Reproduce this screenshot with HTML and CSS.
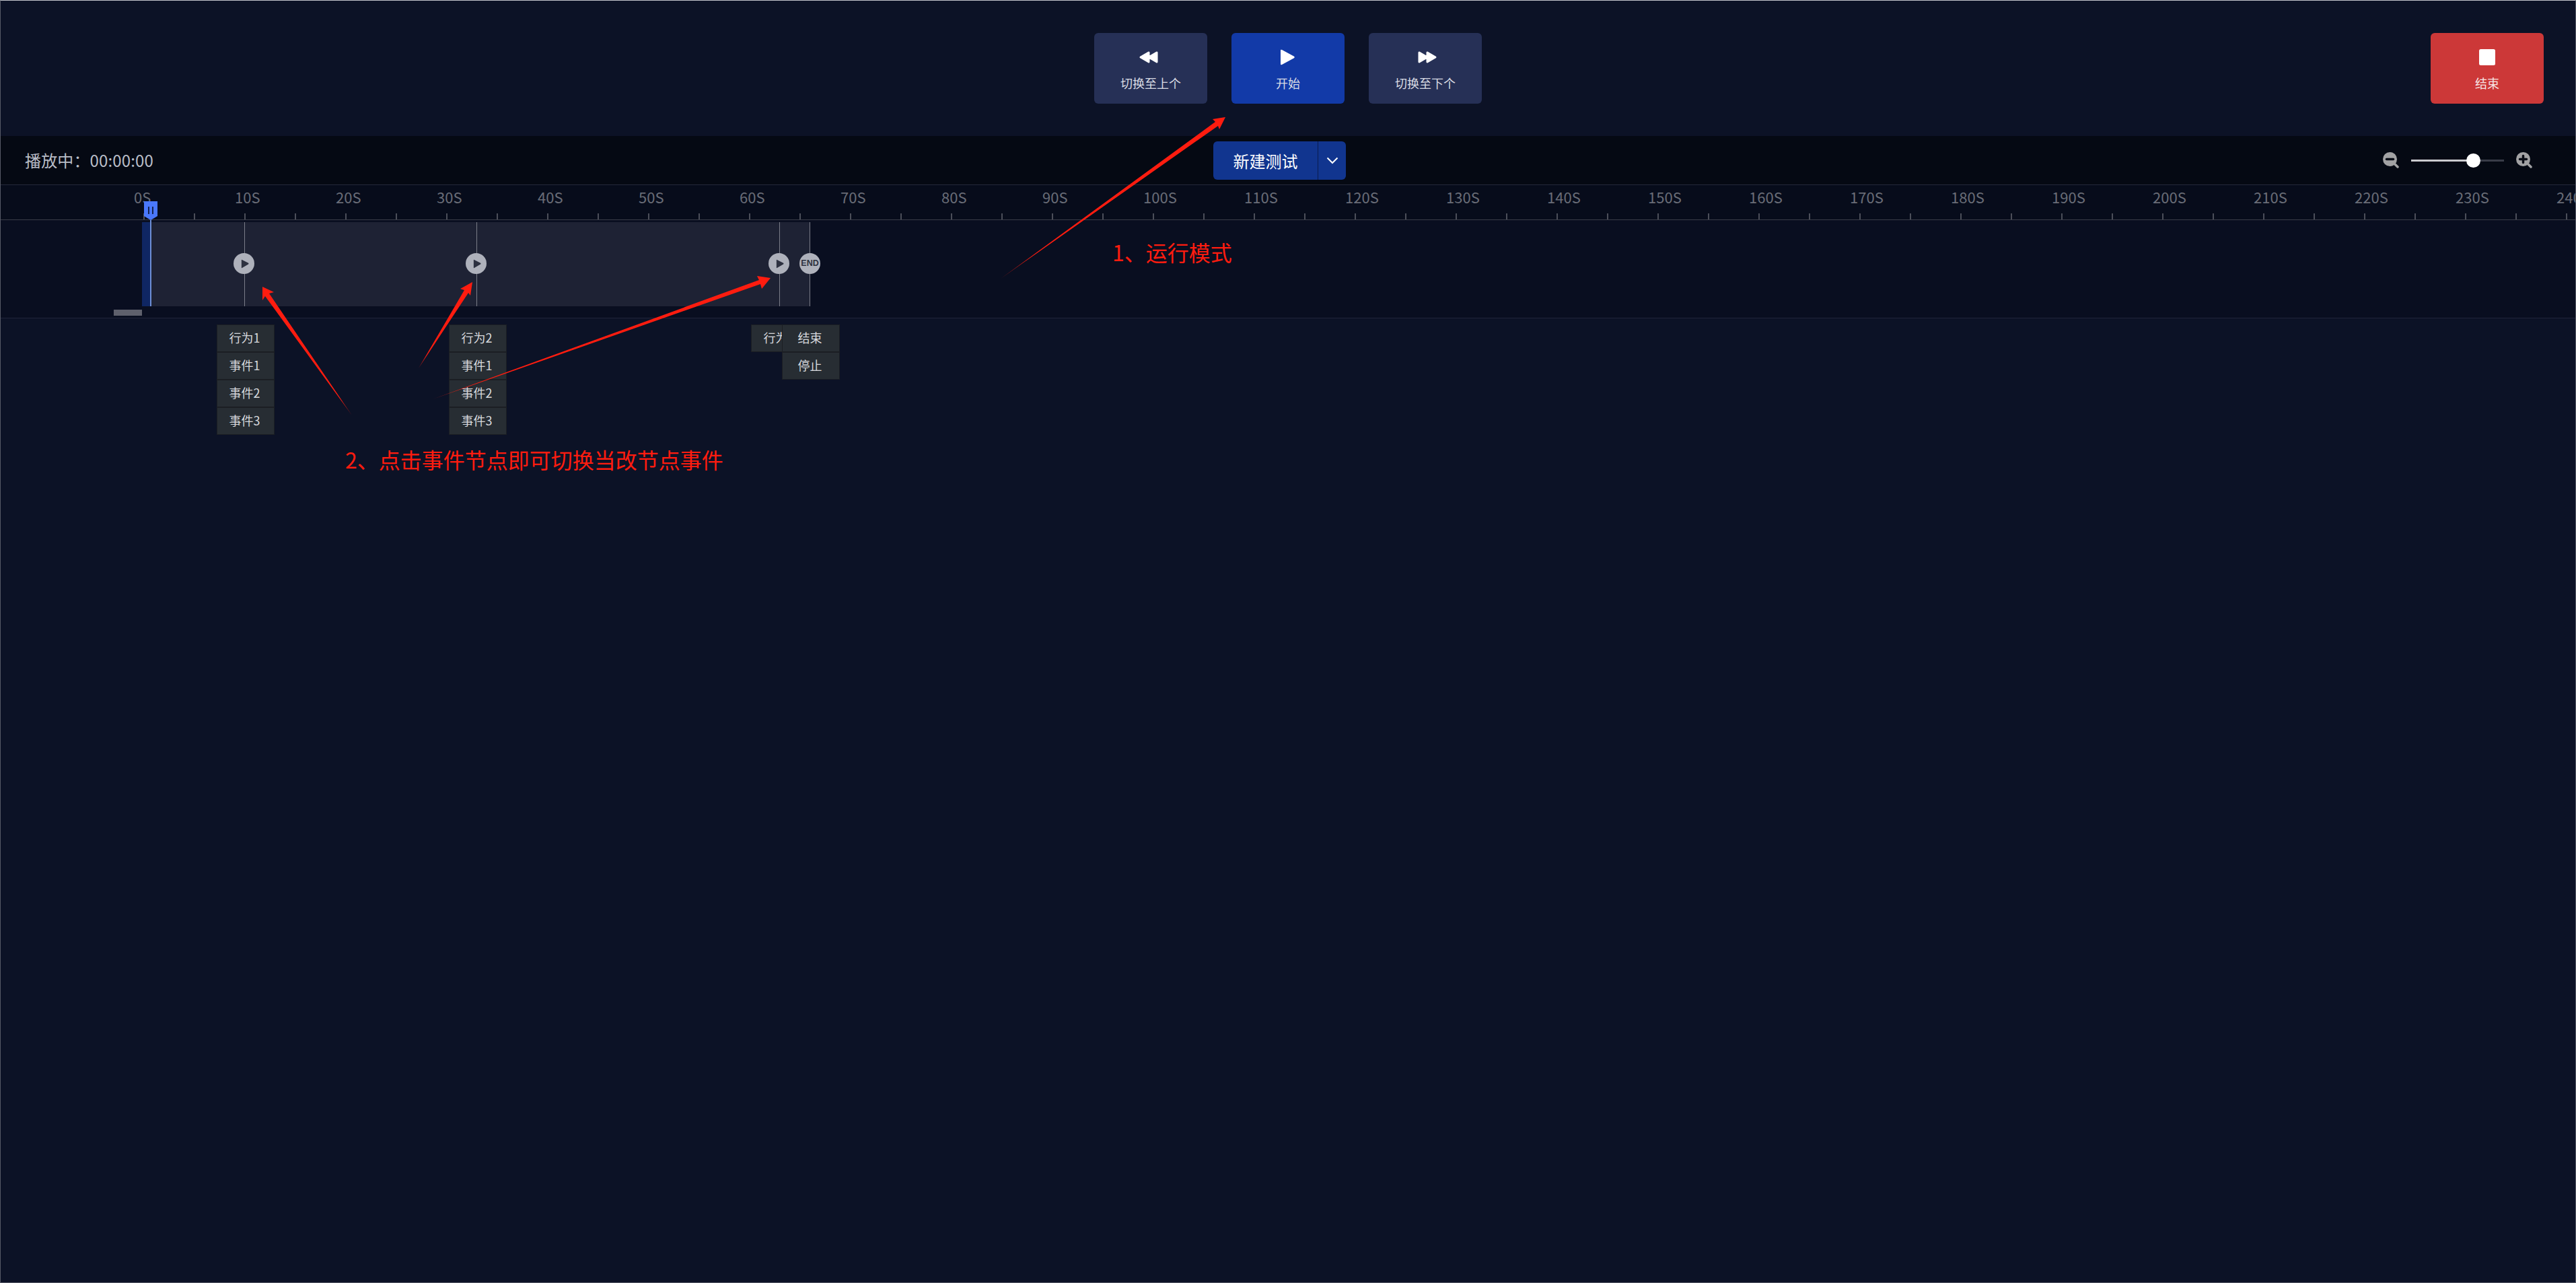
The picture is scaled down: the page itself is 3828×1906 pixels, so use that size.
FILE: index.html
```html
<!DOCTYPE html>
<html lang="zh">
<head>
<meta charset="utf-8">
<title>运行模式</title>
<link rel="stylesheet" href="styles.css">
</head>
<body>
<div class="page">
  <header class="controls">
    <div class="controls-center">
      <button class="ctl ctl-muted">
        <svg class="ctl-icon" viewBox="3 0 28 24"><path d="M2 12 14 5V19ZM14 12 26 5V19Z"/></svg>
        <span>切换至上个</span>
      </button>
      <button class="ctl ctl-primary">
        <svg class="ctl-icon ctl-icon-solid" viewBox="0 0 28 24"><path d="M3 2q0-2 2-.9l18 9.700q1.800 1.200 0 2.400l-18 9.700q-2 1.100-2-.9z"/></svg>
        <span>开始</span>
      </button>
      <button class="ctl ctl-muted">
        <svg class="ctl-icon" viewBox="-3 0 28 24"><path d="M2 5 14 12 2 19ZM14 5 26 12 14 19Z"/></svg>
        <span>切换至下个</span>
      </button>
    </div>
    <button class="ctl ctl-danger">
      <svg class="ctl-icon ctl-icon-solid" viewBox="0 0 28 24"><rect x="2" y="0" width="24" height="24" rx="2.5"/></svg>
      <span>结束</span>
    </button>
  </header>

  <div class="status">
    <div class="status-text">播放中：00:00:00</div>
    <div class="split">
      <span class="split-main">新建测试</span>
      <span class="split-arrow"><svg viewBox="0 0 18 11"><path d="M1.500 1.500 9 9l7.500-7.500"/></svg></span>
    </div>
    <div class="zoom">
      <svg class="zoom-icon" viewBox="0 0 24 24"><circle cx="10.500" cy="10.500" r="10.500"/><path class="glass" d="m17 17 5 5"/><path class="sign" d="M5.500 10.500h10"/></svg>
      <div class="slider"><div class="slider-fill"></div><div class="slider-knob"></div></div>
      <svg class="zoom-icon" viewBox="0 0 24 24"><circle cx="10.500" cy="10.500" r="10.500"/><path class="glass" d="m17 17 5 5"/><path class="sign" d="M5.500 10.500h10M10.500 5.500v10"/></svg>
    </div>
  </div>

  <div class="ruler">
    <div class="ruler-labels">
      <span>0S</span><span>10S</span><span>20S</span><span>30S</span><span>40S</span><span>50S</span><span>60S</span><span>70S</span><span>80S</span><span>90S</span><span>100S</span><span>110S</span><span>120S</span><span>130S</span><span>140S</span><span>150S</span><span>160S</span><span>170S</span><span>180S</span><span>190S</span><span>200S</span><span>210S</span><span>220S</span><span>230S</span><span>240S</span>
    </div>
    <div class="ruler-ticks"></div>
  </div>

  <section class="track">
    <div class="track-bar">
      <div class="track-progress"></div>
      <div class="node node-a"><span class="node-dot"><svg viewBox="0 0 14 16"><path d="M1 1.500v13q0 1 1 .5l11-6.500q1-1 0-2L2 1q-1-.5-1 .5z"/></svg></span></div>
      <div class="node node-b"><span class="node-dot"><svg viewBox="0 0 14 16"><path d="M1 1.500v13q0 1 1 .5l11-6.500q1-1 0-2L2 1q-1-.5-1 .5z"/></svg></span></div>
      <div class="node node-c"><span class="node-dot"><svg viewBox="0 0 14 16"><path d="M1 1.500v13q0 1 1 .5l11-6.500q1-1 0-2L2 1q-1-.5-1 .5z"/></svg></span></div>
      <div class="node node-end"><span class="node-dot node-dot-end">END</span></div>
    </div>
    <div class="track-thumb"></div>
  </section>

  <main class="events">
    <ul class="menu menu-a"><li>行为1</li><li>事件1</li><li>事件2</li><li>事件3</li></ul>
    <ul class="menu menu-b"><li>行为2</li><li>事件1</li><li>事件2</li><li>事件3</li></ul>
    <ul class="menu menu-c"><li>行为3</li></ul>
    <ul class="menu menu-end"><li>结束</li><li>停止</li></ul>
  </main>

  <div class="playhead">
    <svg class="playhead-flag" viewBox="0 0 20 28"><path class="flag" d="M0 0h20v22l-10 6-10-6z"/><path class="bars" d="M7 8v11M13 8v11"/></svg>
    <div class="playhead-line"></div>
  </div>

  <div class="note note-1">1、运行模式</div>
  <div class="note note-2">2、点击事件节点即可切换当改节点事件</div>
  <svg class="arrows" viewBox="0 0 3828 1906">
    <defs>
      <linearGradient id="fade1" gradientUnits="userSpaceOnUse" x1="1487" y1="414" x2="1540" y2="376"><stop offset="0" stop-color="#ff1c0f" stop-opacity=".6"/><stop offset="1" stop-color="#ff1c0f"/></linearGradient>
      <linearGradient id="fade2" gradientUnits="userSpaceOnUse" x1="523" y1="617" x2="505" y2="590"><stop offset="0" stop-color="#ff1c0f" stop-opacity=".6"/><stop offset="1" stop-color="#ff1c0f"/></linearGradient>
      <linearGradient id="fade3" gradientUnits="userSpaceOnUse" x1="622" y1="547" x2="634" y2="527"><stop offset="0" stop-color="#ff1c0f" stop-opacity=".6"/><stop offset="1" stop-color="#ff1c0f"/></linearGradient>
      <linearGradient id="fade4" gradientUnits="userSpaceOnUse" x1="643" y1="593" x2="685" y2="578"><stop offset="0" stop-color="#ff1c0f" stop-opacity=".6"/><stop offset="1" stop-color="#ff1c0f"/></linearGradient>
    </defs>
    <path fill="url(#fade1)" d="M1487 414 1806 181 1802 177 1821 174 1812 192 1810 187z"/>
    <path fill="url(#fade2)" d="M523 617 400 436 407 434 390 426 390 446 394 440z"/>
    <path fill="url(#fade3)" d="M622 547 690 431 684 429 702 419 699 439 696 435z"/>
    <path fill="url(#fade4)" d="M643 593 1128 416 1125 410 1145 413 1132 429 1130 422z"/>
  </svg>
</div>
</body>
</html>
```
FILE: styles.css
```css
* { box-sizing: border-box; }
html, body { margin: 0; padding: 0; background: #0c1226; }
body { font-family: "Noto Sans CJK SC", "Noto Sans", sans-serif; }

.page {
  position: relative;
  width: 3828px;
  height: 1906px;
  overflow: hidden;
  background: #0c1226;
  border: 1px solid #565966;
  border-top-color: #c4c6cc;
  display: flex;
  flex-direction: column;
}

.controls {
  height: 201px;
  flex: none;
  display: grid;
  grid-template-columns: 1fr auto 1fr;
  align-items: start;
  padding-top: 48px;
  background: #0c1226;
}
.controls-center { grid-column: 2; display: flex; gap: 36px; }
.ctl-danger { grid-column: 3; justify-self: end; margin-right: 47px; }

.ctl {
  width: 168px;
  height: 105px;
  border: 0;
  border-radius: 6px;
  padding: 24px 0 0;
  display: flex;
  flex-direction: column;
  align-items: center;
  font: 18px/24px "Noto Sans CJK SC", sans-serif;
  color: #d9dce4;
  gap: 14px;
}
.ctl-icon { width: 28px; height: 24px; fill: #fff; stroke: #fff; stroke-width: 3; stroke-linejoin: round; flex: none; overflow: visible; }
.ctl-icon-solid { stroke: none; }
.ctl-muted { background: #263056; }
.ctl-primary { background: #123aa8; }
.ctl-danger { background: #cc3838; color: #f6e4e4; }

.status {
  height: 72px;
  flex: none;
  display: grid;
  grid-template-columns: 1fr auto 1fr;
  align-items: center;
  background: #050913;
}
.status-text { margin-left: 36px; font-size: 24px; line-height: 32px; color: #b9bdc7; letter-spacing: .15px; }
.split {
  display: flex;
  height: 57px;
  margin-right: 25px;
  border-radius: 6px;
  overflow: hidden;
  background: #11358f;
  color: #fff;
  font-size: 24px;
  width: 197px;
}
.split-main { width: 156px; display: flex; align-items: center; justify-content: center; border-right: 1px solid #0a1c4e; }
.split-arrow { flex: 1; display: flex; align-items: center; justify-content: center; }
.split-arrow svg { width: 18px; height: 11px; fill: none; stroke: #fff; stroke-width: 2; }

.zoom { justify-self: end; display: flex; align-items: center; margin-right: 64px; }
.zoom-icon { width: 24px; height: 24px; fill: #a2a2a4; }
.zoom-icon .glass { stroke: #a2a2a4; stroke-width: 3.500; stroke-linecap: round; fill: none; }
.zoom-icon .sign { stroke: #0a0d16; stroke-width: 3.500; stroke-linecap: round; fill: none; }
.slider { position: relative; width: 138px; height: 3px; margin: 0 18px; background: #393c48; }
.slider-fill { width: 92px; height: 100%; background: #cbcbcf; }
.slider-knob { position: absolute; left: 82px; top: -9px; width: 21px; height: 21px; border-radius: 50%; background: #fff; }

.ruler {
  height: 53px;
  flex: none;
  background: #070c1b;
  border-top: 1px solid #24283a;
  border-bottom: 1px solid #3a3d48;
  display: flex;
  flex-direction: column;
  overflow: hidden;
}
.ruler-labels {
  display: flex;
  padding: 3px 0 0 198px;
  height: 42px;
  font-size: 22px;
  line-height: 29px;
  color: #696c77;
}
.ruler-labels span { flex: none; width: 150px; }
.ruler-ticks {
  flex: 1;
  margin-left: 212px;
  background-image: linear-gradient(90deg, #4b4e59 2px, transparent 2px);
  background-size: 75px 100%;
  background-repeat: repeat-x;
}

.track {
  height: 146px;
  flex: none;
  position: relative;
  background: #090e20;
  border-bottom: 1px solid #20243a;
  padding: 3px 0 0 210px;
}
.track-bar {
  position: relative;
  width: 993px;
  height: 125px;
  background: #1e2234;
}
.track-progress { width: 13px; height: 100%; background: #0f2663; }
.node { position: absolute; top: 0; bottom: 0; width: 1px; background: #7a7d88; }
.node-a { left: 152px; }
.node-b { left: 497px; }
.node-c { left: 947px; }
.node-end { left: 992px; }
.node-dot {
  position: absolute;
  left: -16px;
  top: 46px;
  width: 31px;
  height: 31px;
  border-radius: 50%;
  background: #aeb1bb;
  display: flex;
  align-items: center;
  justify-content: center;
}
.node-dot svg { width: 12px; height: 14px; fill: #2d3140; margin-left: 2px; }
.node-dot-end {
  left: -15px;
  font: bold 12.500px/1 "Liberation Sans", sans-serif;
  color: #2d3140;
}
.track-thumb { position: absolute; left: 168px; top: 133px; width: 42px; height: 9px; background: #5e606c; }

.events { flex: 1; position: relative; }
.menu { position: absolute; top: 9px; margin: 0; padding: 0; list-style: none; width: 86px; }
.menu li {
  height: 41px;
  background: #272d33;
  border: 1px solid #1b1e23;
  color: #d8dade;
  font-size: 18px;
  line-height: 37px;
  text-align: center;
  padding-right: 3px;
  white-space: nowrap;
  overflow: hidden;
}
.menu-a { left: 321px; }
.menu-b { left: 666px; }
.menu-c { left: 1115px; }
.menu-end { left: 1161px; }

.playhead { position: absolute; left: 213px; top: 298px; width: 20px; display: flex; flex-direction: column; align-items: center; height: 156px; }
.playhead-flag { width: 20px; height: 28px; flex: none; }
.playhead-flag .flag { fill: #4a78fb; }
.playhead-flag .bars { stroke: #14224e; stroke-width: 2; fill: none; }
.playhead-line { flex: 1; width: 2px; background: #6d8fd6; }

.note { position: absolute; font-size: 32px; line-height: 44px; color: #ff1c0f; white-space: nowrap; }
.note-1 { left: 1652px; top: 351px; }
.note-2 { left: 512px; top: 659px; }
.arrows { position: absolute; left: -1px; top: -1px; width: 3828px; height: 1906px; pointer-events: none; }
```
